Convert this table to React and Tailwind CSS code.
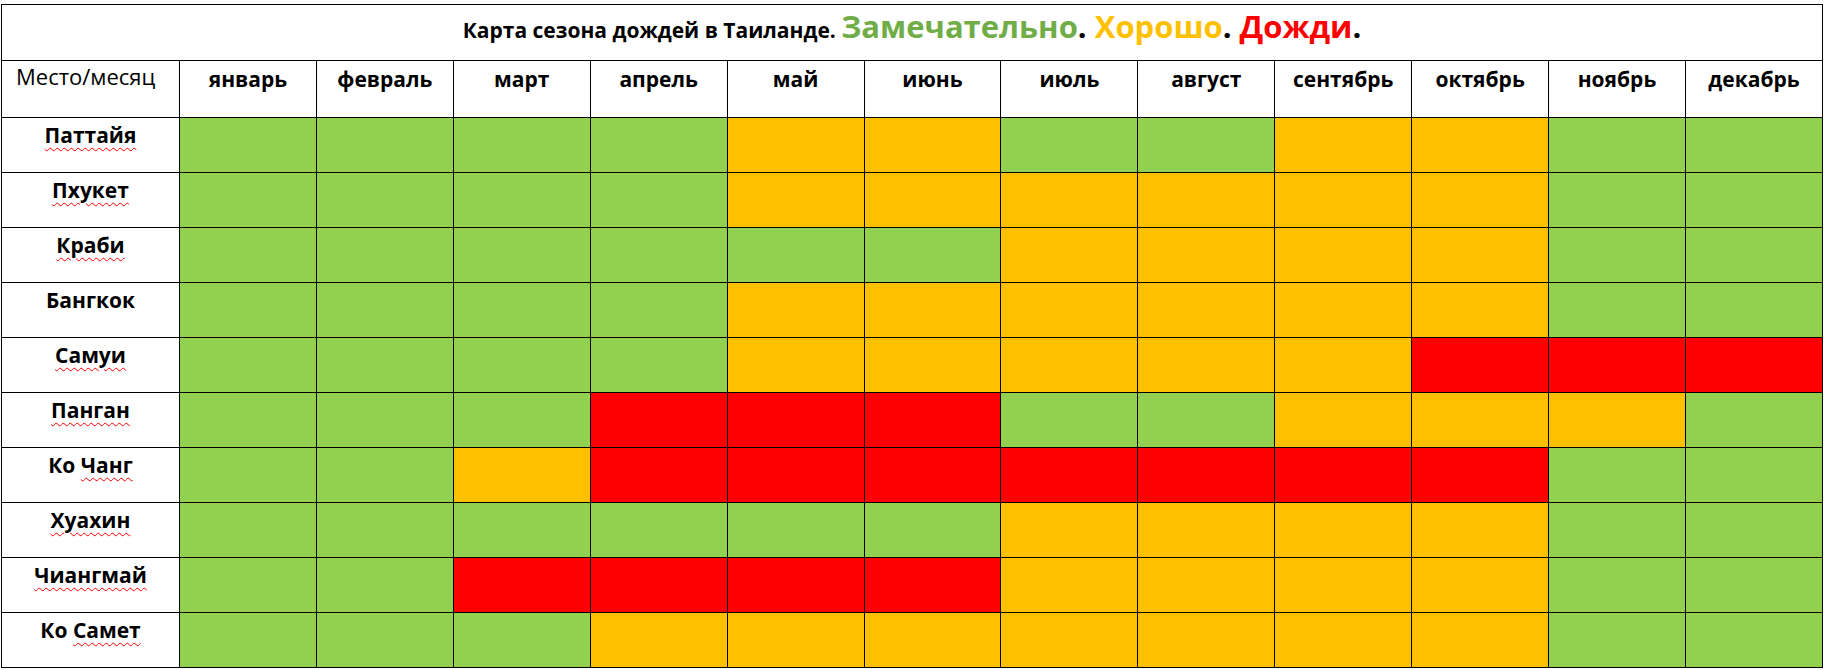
import React from "react";

const months = [
  "январь",
  "февраль",
  "март",
  "апрель",
  "май",
  "июнь",
  "июль",
  "август",
  "сентябрь",
  "октябрь",
  "ноябрь",
  "декабрь",
];

// G - замечательно, O - хорошо, R - дожди
const places = [
  { name: [{ t: "Паттайя", bad: true }], row: "GGGGOOGGOOGG" },
  { name: [{ t: "Пхукет", bad: true }], row: "GGGGOOOOOOGG" },
  { name: [{ t: "Краби", bad: true }], row: "GGGGGGOOOOGG" },
  { name: [{ t: "Бангкок" }], row: "GGGGOOOOOOGG" },
  { name: [{ t: "Самуи", bad: true }], row: "GGGGOOOOORRR" },
  { name: [{ t: "Панган", bad: true }], row: "GGGRRRGGOOOG" },
  { name: [{ t: "Ко " }, { t: "Чанг", bad: true }], row: "GGORRRRRRRGG" },
  { name: [{ t: "Хуахин", bad: true }], row: "GGGGGGOOOOGG" },
  { name: [{ t: "Чиангмай", bad: true }], row: "GGRRRROOOOGG" },
  { name: [{ t: "Ко " }, { t: "Самет", bad: true }], row: "GGGOOOOOOOGG" },
];

const cellColor = {
  G: "bg-[#92d050]",
  O: "bg-[#ffc000]",
  R: "bg-[#ff0000]",
};

const PlaceName = ({ parts }) => (
  <>
    {parts.map((p, i) =>
      p.bad ? (
        <span
          key={i}
          className="underline decoration-wavy decoration-[#ff0000] decoration-1 underline-offset-[4px]"
        >
          {p.t}
        </span>
      ) : (
        <span key={i} className="whitespace-pre">
          {p.t}
        </span>
      )
    )}
  </>
);

const App = () => {
  return (
    <div className="h-[670px] w-[1824px] bg-white pl-px pt-[4px] font-['Open_Sans',sans-serif] text-black">
      <table className="w-[1822px] table-fixed border-collapse">
        <colgroup>
          <col className="w-[178px]" />
          {months.map((m) => (
            <col key={m} />
          ))}
        </colgroup>
        <tbody>
          <tr className="h-[56px]">
            <td
              colSpan={13}
              className="border border-black pb-[8px] text-center align-middle leading-[40px]"
            >
              <span className="text-[21px] font-bold">
                Карта сезона дождей в Таиланде.{" "}
              </span>
              <span className="text-[31px] font-bold text-[#70ad47]">
                Замечательно
              </span>
              <span className="text-[31px] font-bold">. </span>
              <span className="text-[31px] font-bold text-[#ffc000]">
                Хорошо
              </span>
              <span className="text-[31px] font-bold">. </span>
              <span className="text-[31px] font-bold text-[#ff0000]">
                Дожди
              </span>
              <span className="text-[31px] font-bold">.</span>
            </td>
          </tr>
          <tr className="h-[57px]">
            <td className="border border-black pl-[14px] pt-[1px] align-top text-[22px] leading-[28px]">
              Место/месяц
            </td>
            {months.map((m) => (
              <td
                key={m}
                className="border border-black pt-[4px] text-center align-top text-[21px] font-bold leading-[28px]"
              >
                {m}
              </td>
            ))}
          </tr>
          {places.map((p, i) => (
            <tr key={i} className="h-[55px]">
              <td className="border border-black pt-[3px] text-center align-top text-[21px] font-bold leading-[28px]">
                <PlaceName parts={p.name} />
              </td>
              {p.row.split("").map((c, j) => (
                <td key={j} className={`border border-black ${cellColor[c]}`} />
              ))}
            </tr>
          ))}
        </tbody>
      </table>
    </div>
  );
};

export default App;
